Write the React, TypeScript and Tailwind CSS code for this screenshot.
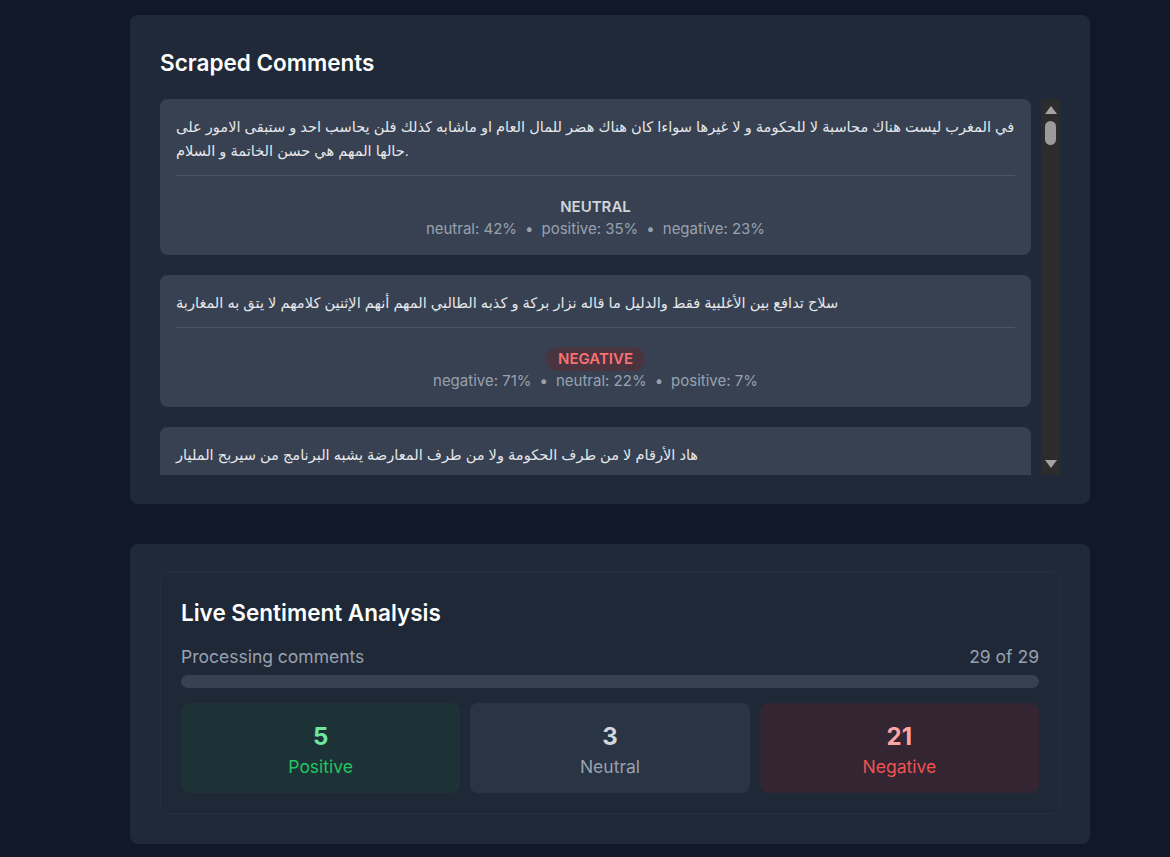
const comments = [
  {
    text: "في المغرب ليست هناك محاسبة لا للحكومة و لا غيرها سواءا كان هناك هضر للمال العام او ماشابه كذلك فلن يحاسب احد و ستبقى الامور على حالها المهم هي حسن الخاتمة و السلام.",
    label: "NEUTRAL",
    badge: "text-gray-300",
    scores: ["neutral: 42%", "positive: 35%", "negative: 23%"],
  },
  {
    text: "سلاح تدافع بين الأغلبية فقط والدليل ما قاله نزار بركة و كذبه الطالبي المهم أنهم الإثنين كلامهم لا يتق به المغاربة",
    label: "NEGATIVE",
    badge: "bg-[#4a3440] text-[#f87171]",
    scores: ["negative: 71%", "neutral: 22%", "positive: 7%"],
  },
  {
    text: "هاد الأرقام لا من طرف الحكومة ولا من طرف المعارضة يشبه البرنامج من سيربح المليار",
    label: "NEUTRAL",
    badge: "text-gray-300",
    scores: ["neutral: 50%", "negative: 30%", "positive: 20%"],
  },
];

const CommentCard = ({ c }: { c: (typeof comments)[number] }) => {
  return (
    <div className="rounded-lg bg-[#374151] px-4 pb-4 pt-4">
      <p className="text-[14.6px] leading-6 text-gray-200 [font-family:Arial,'Liberation_Sans','DejaVu_Sans',sans-serif]">
        {c.text}
      </p>
      <div className="mt-3 border-t border-[#4b5563] pt-[18px] text-center">
        <span className={`inline-block rounded-full px-3 py-0.5 text-[15px] leading-5 font-semibold ${c.badge}`}>
          {c.label}
        </span>
        <div className="text-[15px] leading-5 text-gray-400">
          {c.scores.map((s, i) => (
            <span key={s}>
              {i > 0 && <span className="mx-2">•</span>}
              {s}
            </span>
          ))}
        </div>
      </div>
    </div>
  );
};

const Scrollbar = () => (
  <div className="flex w-[19px] shrink-0 flex-col items-center bg-[#2c2c2c] py-[7px]">
    <svg width="12" height="8" viewBox="0 0 12 8">
      <path d="M6 0 L12 8 L0 8 Z" fill="#a3a3a3" />
    </svg>
    <div className="mt-[7px] h-6 w-[11px] rounded-full bg-[#9b9b9b]" />
    <div className="flex-1" />
    <svg width="12" height="8" viewBox="0 0 12 8">
      <path d="M0 0 L12 0 L6 8 Z" fill="#a3a3a3" />
    </svg>
  </div>
);

const Stat = ({ n, label, box, num, text }: { n: number; label: string; box: string; num: string; text: string }) => (
  <div className={`flex flex-col items-center rounded-lg pb-3 pt-[18px] ${box}`}>
    <span className={`text-2xl font-bold ${num}`}>{n}</span>
    <span className={`text-[17.5px] leading-7 ${text}`}>{label}</span>
  </div>
);

export default function App() {
  return (
    <div className="min-h-[857px] bg-[#111827] pt-[15px] pb-10 font-['Inter',sans-serif]">
      <div className="ml-[130px] flex w-[960px] flex-col gap-10">
        <section className="rounded-lg bg-[#1f2937] px-[30px] pb-[29px] pt-8">
          <h2 className="mb-5 text-[22.5px] leading-8 font-semibold text-white">Scraped Comments</h2>
          <div className="flex h-[376px] gap-2.5">
            <div className="flex flex-1 flex-col gap-5 overflow-hidden">
              {comments.map((c, i) => (
                <CommentCard key={i} c={c} />
              ))}
            </div>
            <Scrollbar />
          </div>
        </section>

        <section className="rounded-lg bg-[#1f2937] px-[30px] pb-[30px] pt-7">
          <div className="rounded-lg border border-[#243040] bg-[#1e2836] px-5 pb-5 pt-6">
            <h2 className="mb-3.5 text-[22.5px] leading-8 font-semibold text-white">Live Sentiment Analysis</h2>
            <div className="flex justify-between text-[17.5px] leading-7 text-gray-400">
              <span>Processing comments</span>
              <span>29 of 29</span>
            </div>
            <div className="mt-1 h-[13px] rounded-full bg-[#374151]" />
            <div className="mt-[15px] grid grid-cols-3 gap-2.5">
              <Stat n={5} label="Positive" box="bg-[#1d3237]" num="text-[#6ee7a0]" text="text-[#22c55e]" />
              <Stat n={3} label="Neutral" box="bg-[#293444]" num="text-gray-300" text="text-gray-400" />
              <Stat n={21} label="Negative" box="bg-[#332532]" num="text-[#fca5a5]" text="text-[#f05252]" />
            </div>
          </div>
        </section>
      </div>
    </div>
  );
}
